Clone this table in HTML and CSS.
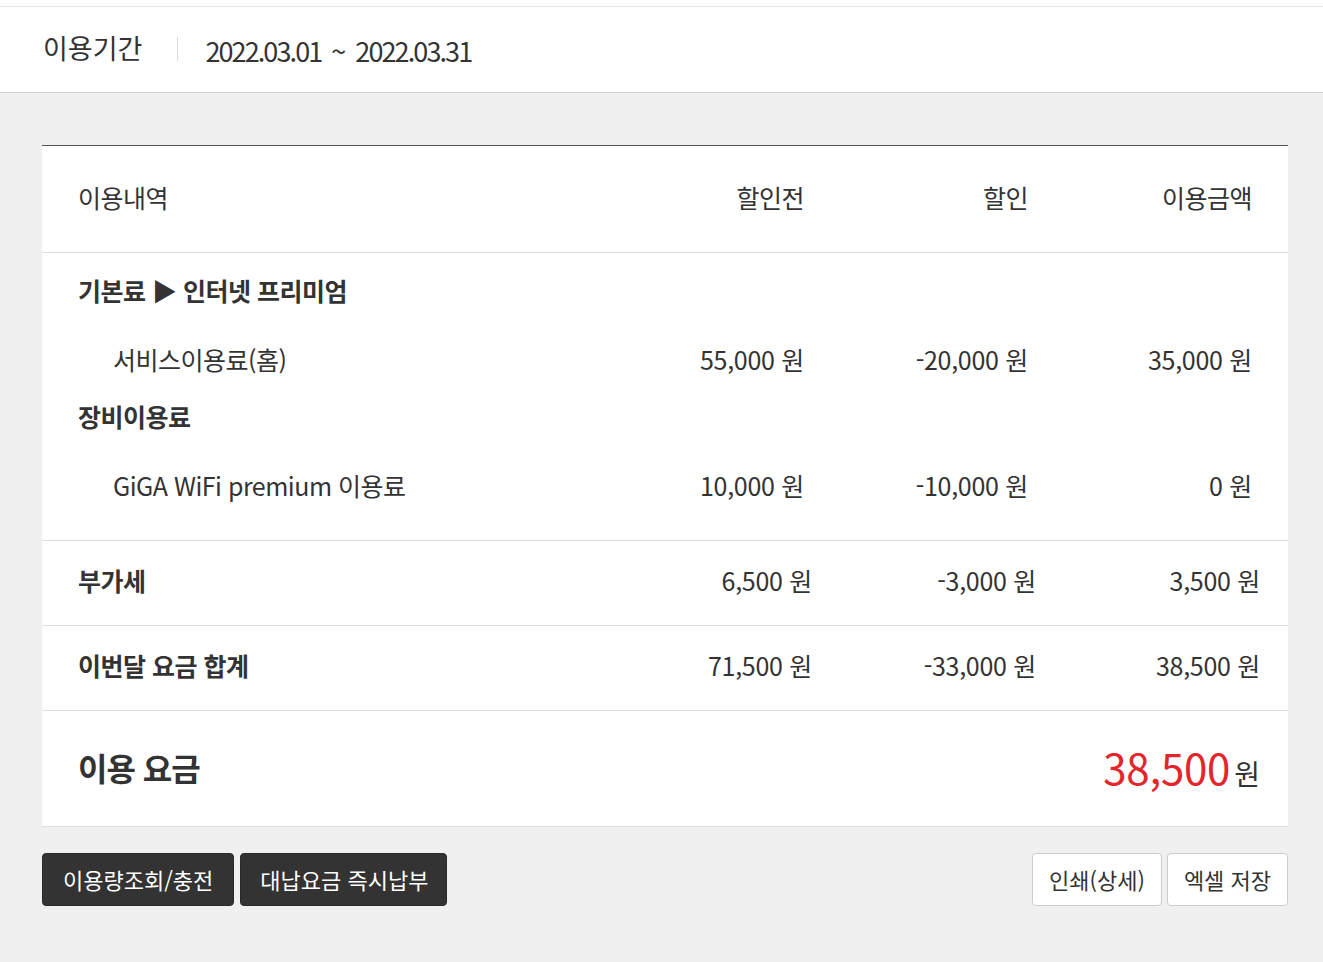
FILE: index.html
```html
<!DOCTYPE html>
<html lang="ko">
<head>
<meta charset="utf-8">
<title>이용요금</title>
<link rel="stylesheet" href="styles.css">
</head>
<body>
<div class="top">
  <div class="period">
    <span class="period-label">이용기간</span>
    <span class="period-sep"></span>
    <span class="period-value">2022.03.01<span class="tilde">~</span>2022.03.31</span>
  </div>
</div>
<main class="content">
  <section class="bill">
    <div class="row head">
      <div class="c-name">이용내역</div>
      <div class="c-num">할인전</div>
      <div class="c-num">할인</div>
      <div class="c-num">이용금액</div>
    </div>
    <div class="detail">
      <div class="row group">
        <div class="c-name strong">기본료 ▶ 인터넷 프리미엄</div>
      </div>
      <div class="row item">
        <div class="c-name sub">서비스이용료(홈)</div>
        <div class="c-num">55,000 원</div>
        <div class="c-num">-20,000 원</div>
        <div class="c-num">35,000 원</div>
      </div>
      <div class="row group g2">
        <div class="c-name strong">장비이용료</div>
      </div>
      <div class="row item">
        <div class="c-name sub">GiGA WiFi premium 이용료</div>
        <div class="c-num">10,000 원</div>
        <div class="c-num">-10,000 원</div>
        <div class="c-num">0 원</div>
      </div>
    </div>
    <div class="row sum">
      <div class="c-name strong">부가세</div>
      <div class="c-num">6,500 원</div>
      <div class="c-num">-3,000 원</div>
      <div class="c-num">3,500 원</div>
    </div>
    <div class="row sum">
      <div class="c-name strong">이번달 요금 합계</div>
      <div class="c-num">71,500 원</div>
      <div class="c-num">-33,000 원</div>
      <div class="c-num">38,500 원</div>
    </div>
    <div class="total">
      <div class="total-label">이용 요금</div>
      <div class="total-value"><span class="total-amount">38,500</span><span class="total-unit">원</span></div>
    </div>
  </section>
  <div class="actions">
    <div class="btn-group">
      <button class="btn dark">이용량조회/충전</button>
      <button class="btn dark narrow">대납요금 즉시납부</button>
    </div>
    <div class="btn-group">
      <button class="btn light">인쇄(상세)</button>
      <button class="btn light">엑셀 저장</button>
    </div>
  </div>
</main>
</body>
</html>
```

FILE: styles.css
```css
* { box-sizing: border-box; }
html, body { margin: 0; padding: 0; }
body {
  background: #f0f0f0;
  color: #333;
  font-family: "Noto Sans CJK KR", "Noto Sans", sans-serif;
  font-size: 25px;
}
.top {
  background: #fff;
  padding-top: 6px;
}
.period {
  height: 87px;
  border-top: 1px solid #e2e2e2;
  border-bottom: 1px solid #cfcfcf;
  display: flex;
  align-items: center;
  padding-left: 43px;
  padding-bottom: 4px;
  font-size: 27px;
}
.period-label { letter-spacing: 0; }
.period-sep {
  width: 1px;
  height: 24px;
  background: #dcdcdc;
  margin: 2px 27px 0 35px;
}
.period-value { letter-spacing: -1.9px; padding-top: 5px; }
.tilde { margin: 0 9px 0 10px; letter-spacing: 0; }

.content { padding: 52px 35px 0 42px; }
.bill {
  background: #fff;
  border-top: 1px solid #555;
  border-bottom: 1px solid #dedede;
}
.row {
  display: grid;
  grid-template-columns: 1fr 224px 224px 224px;
  align-items: center;
  padding: 0 36px;
}
.c-num { text-align: right; letter-spacing: -0.3px; }
.c-name { letter-spacing: -0.5px; }
.strong { font-weight: 700; letter-spacing: -0.5px; }
.head {
  height: 107px;
  padding-bottom: 4px;
  border-bottom: 1px solid #e0e0e0;
}
.head .c-num { letter-spacing: -0.5px; }
.detail {
  padding: 17px 0 35px;
  border-bottom: 1px solid #e0e0e0;
}
.group { height: 40px; }
.g2 { margin-top: 17px; }
.item { height: 40px; margin-top: 29px; }
.sub { padding-left: 35px; }
.sum {
  height: 85px;
  padding-right: 28px;
  padding-bottom: 7px;
  border-bottom: 1px solid #e0e0e0;
}
.total {
  height: 115px;
  display: flex;
  align-items: center;
  justify-content: space-between;
  padding: 0 28px 4px 36px;
}
.total-label { font-size: 32px; font-weight: 700; letter-spacing: -1px; }
.total-value { display: flex; align-items: baseline; }
.total-amount { color: #e3262b; font-size: 42px; letter-spacing: -0.2px; }
.total-unit { font-size: 28px; margin-left: 4px; }

.actions {
  display: flex;
  justify-content: space-between;
  margin-top: 26px;
}
.btn-group { display: flex; gap: 5px; }
.actions .btn-group:first-child { gap: 6px; }
.btn {
  height: 53px;
  font-family: inherit;
  font-size: 22px;
  letter-spacing: 0;
  border-radius: 4px;
  cursor: pointer;
  padding-bottom: 3px;
}
.dark {
  background: #333;
  color: #fff;
  border: 1px solid #2a2a2a;
  padding-left: 20px;
  padding-right: 20px;
}
.dark.narrow {
  padding-left: 19px;
  padding-right: 18px;
}
.light {
  background: #fff;
  color: #333;
  border: 1px solid #ccc;
  padding-left: 16px;
  padding-right: 16px;
}
```
